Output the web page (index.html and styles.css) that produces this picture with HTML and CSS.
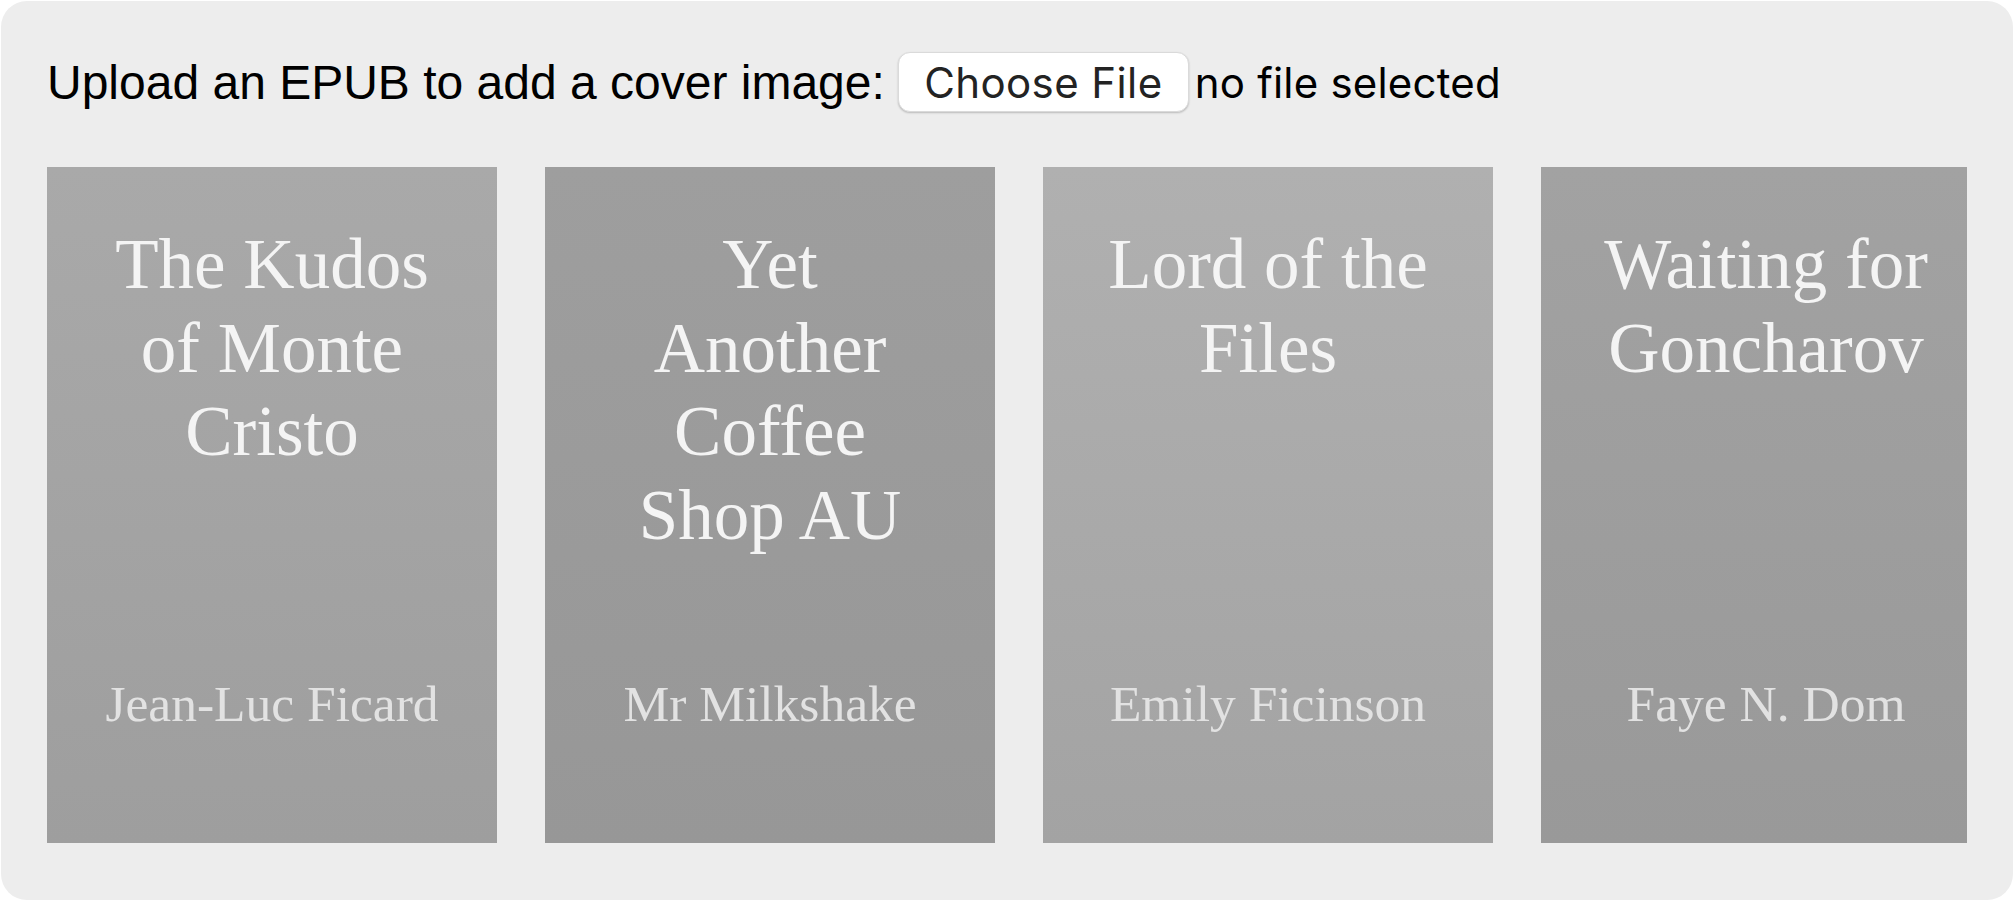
FILE: index.html
```html
<!DOCTYPE html>
<html lang="en">
<head>
<meta charset="utf-8">
<title>Covers</title>
<link rel="stylesheet" href="styles.css">
</head>
<body>
<main class="panel">
  <div class="upload-row">
    <span class="upload-label">Upload an EPUB to add a cover image:</span>
    <label class="file-picker">
      <span class="file-btn">Choose File</span>
      <span class="file-name">no file selected</span>
    </label>
  </div>
  <div class="shelf">
    <article class="cover cover-1">
      <h2 class="cover-title">The Kudos of Monte Cristo</h2>
      <p class="cover-author">Jean-Luc Ficard</p>
    </article>
    <article class="cover cover-2">
      <h2 class="cover-title">Yet Another Coffee Shop AU</h2>
      <p class="cover-author">Mr Milkshake</p>
    </article>
    <article class="cover cover-3">
      <h2 class="cover-title">Lord of the Files</h2>
      <p class="cover-author">Emily Ficinson</p>
    </article>
    <article class="cover cover-4">
      <h2 class="cover-title">Waiting for Goncharov</h2>
      <p class="cover-author">Faye N. Dom</p>
    </article>
  </div>
</main>
</body>
</html>
```

FILE: styles.css
```css
html, body {
  margin: 0;
  padding: 0;
  background: #ffffff;
}

body {
  font-family: "Liberation Sans", Arial, sans-serif;
}

.panel {
  margin: 1px 1px 0 1px;
  padding: 46px 46px 57px 46px;
  background: #ededed;
  border-radius: 26px;
}

.upload-row {
  display: flex;
  align-items: center;
  height: 70px;
}

.upload-label {
  font-size: 48px;
  color: #000;
  margin-right: 13px;
  white-space: nowrap;
}

.file-picker {
  display: flex;
  align-items: center;
}

.file-btn {
  box-sizing: border-box;
  width: 291px;
  height: 60px;
  display: flex;
  align-items: center;
  justify-content: center;
  background: #ffffff;
  border: 1px solid #dadada;
  border-radius: 12px;
  box-shadow: 0 1px 2px rgba(0, 0, 0, 0.22);
  font-family: Inter, "Liberation Sans", sans-serif;
  font-size: 42px;
  letter-spacing: 0.4px;
  color: #232323;
  margin-right: 6px;
}

.file-name {
  font-family: Inter, "Liberation Sans", sans-serif;
  font-size: 42px;
  letter-spacing: 0.2px;
  color: #000;
  white-space: nowrap;
}

.shelf {
  display: flex;
  gap: 48px;
  margin-top: 50px;
  overflow: hidden;
}

.cover {
  flex: 0 0 450px;
  min-width: 0;
  height: 676px;
  box-sizing: border-box;
  padding: 56px 60px 108px;
  display: flex;
  flex-direction: column;
  align-items: stretch;
  text-align: center;
  font-family: "Liberation Serif", "Times New Roman", serif;
}

.cover-1 { background: linear-gradient(#a9a9a9, #9e9e9e); }
.cover-2 { background: linear-gradient(#9e9e9e, #979797); }
.cover-3 { background: linear-gradient(#b0b0b0, #a3a3a3); }
.cover-4 { background: linear-gradient(#a2a2a2, #999999); }

.cover-title {
  margin: 0;
  font-weight: normal;
  font-size: 71px;
  line-height: 83.7px;
  color: #f4f4f4;
}

.cover-author {
  margin: auto -20px 0;
  font-size: 51.5px;
  line-height: 62px;
  color: #e2e2e2;
  white-space: nowrap;
}
```
